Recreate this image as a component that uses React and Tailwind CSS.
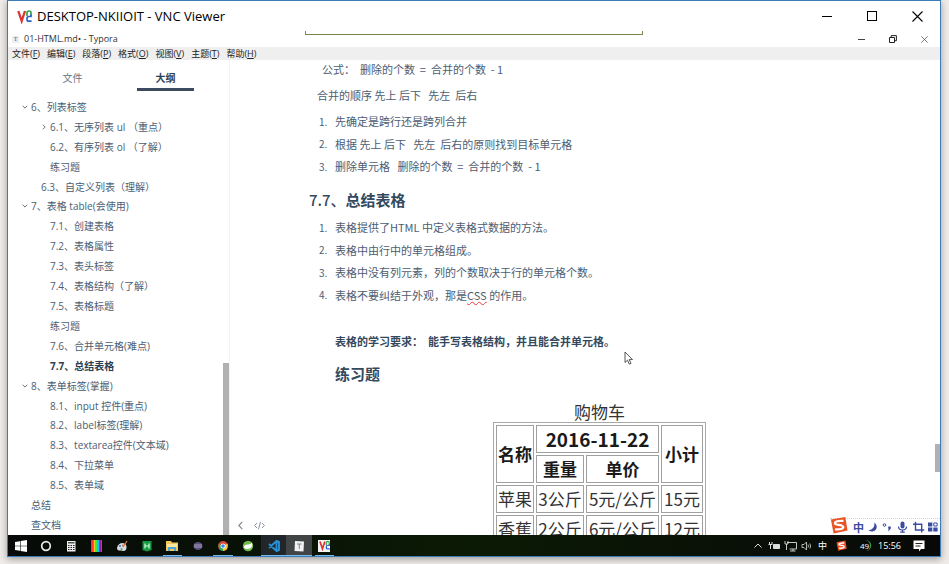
import React from "react";

const UI = "font-['Open_Sans','Noto_Sans_CJK_SC',sans-serif]";

const menus = [
  ["文件", "F"], ["编辑", "E"], ["段落", "P"], ["格式", "O"],
  ["视图", "V"], ["主题", "T"], ["帮助", "H"],
];

const outline = [
  { t: "6、列表标签", l: 0, a: "down" },
  { t: "6.1、无序列表 ul （重点）", l: 2, a: "right" },
  { t: "6.2、有序列表 ol （了解）", l: 2 },
  { t: "练习题", l: 2 },
  { t: "6.3、自定义列表（理解）", l: 1 },
  { t: "7、表格 table(会使用)", l: 0, a: "down" },
  { t: "7.1、创建表格", l: 2 },
  { t: "7.2、表格属性", l: 2 },
  { t: "7.3、表头标签", l: 2 },
  { t: "7.4、表格结构（了解）", l: 2 },
  { t: "7.5、表格标题", l: 2 },
  { t: "练习题", l: 2 },
  { t: "7.6、合并单元格(难点)", l: 2 },
  { t: "7.7、总结表格", l: 2, active: true },
  { t: "8、表单标签(掌握)", l: 0, a: "down" },
  { t: "8.1、input 控件(重点)", l: 2 },
  { t: "8.2、label标签(理解)", l: 2 },
  { t: "8.3、textarea控件(文本域)", l: 2 },
  { t: "8.4、下拉菜单", l: 2 },
  { t: "8.5、表单域", l: 2 },
  { t: "总结", l: 0 },
  { t: "查文档", l: 0 },
];

const indent = ["pl-[14px]", "pl-6", "pl-[33px]"];

function Arrow({ kind }) {
  return (
    <span className="flex w-[9px] shrink-0 items-center">
      {kind && (
        <svg width="6" height="6" viewBox="0 0 6 6" fill="none" stroke="#66727f">
          <path d={kind === "down" ? "M.7 1.8 3 4.1 5.3 1.8" : "M1.9.7 4.2 3 1.9 5.3"} />
        </svg>
      )}
    </span>
  );
}

function VncLogo({ size }) {
  return (
    <svg width={size} height={size} viewBox="0 0 15 15" fill="none">
      <path d="M1.300 2 4.700 12 8 2" stroke="#df3434" strokeWidth="2.300" />
      <path d="M10 7V3.800Q10 2 12 2T14 3.800V6.500" stroke="#2fa84a" strokeWidth="1.700" />
      <path d="M14 5.500V7.500H11.800Q10 7.500 10 9.200V10.500Q10 12.200 11.800 12.200H14.600" stroke="#2b63c9" strokeWidth="1.700" />
    </svg>
  );
}

function CloseIcon({ size }) {
  return (
    <svg width={size} height={size} viewBox="0 0 11 11" stroke="currentColor" strokeWidth="1.1">
      <path d="M.5.5 10.500 10.500M10.500.5.5 10.500" />
    </svg>
  );
}

function TitleBars() {
  return (
    <header className={UI}>
      <div className="flex h-[30px] items-center pl-[9px] text-black">
        <VncLogo size={15} />
        <h1 className="ml-[5px] flex-1 text-[13px] leading-4">DESKTOP-NKIIOIT - VNC Viewer</h1>
        <button aria-label="最小化" className="flex h-full w-[45px] items-center justify-center"><span className="h-px w-[10px] bg-black" /></button>
        <button aria-label="最大化" className="flex h-full w-[45px] items-center justify-center"><span className="size-[10px] border border-black" /></button>
        <button aria-label="关闭" className="flex h-full w-[46px] items-center justify-center"><CloseIcon size={11} /></button>
      </div>
      <div className="flex h-4 items-center pl-1 text-[#333]">
        <span className="flex size-[7px] items-center justify-center bg-[#eee] font-['Liberation_Serif',serif] text-[6px] text-[#555]">T</span>
        <h2 className="ml-[5px] flex-1 text-[9px] leading-4">01-HTML.md• - Typora</h2>
        <button aria-label="最小化文档窗口" className="flex h-full w-[31px] items-center justify-center"><span className="h-px w-[7px] bg-[#444]" /></button>
        <button aria-label="还原文档窗口" className="flex h-full w-[31px] items-center justify-center">
          <svg width="8" height="8" viewBox="0 0 8 8" fill="none" stroke="#222" strokeWidth="1"><path d="M.5 2.500H5.500V7.500H.5ZM2.200 2.500V.6H7.400V5.700H5.500" /></svg>
        </button>
        <button aria-label="关闭文档窗口" className="flex h-full w-[32px] items-center justify-center text-[#444]"><CloseIcon size={7} /></button>
      </div>
      <nav className="flex h-[13px] items-center gap-[7px] bg-[#efefef] pl-1 text-[9px] leading-[13px] text-[#222]">
        {menus.map(([name, key]) => (
          <button key={key} className="whitespace-nowrap">{name}(<u>{key}</u>)</button>
        ))}
      </nav>
    </header>
  );
}

function Sidebar() {
  return (
    <aside className={`${UI} relative flex w-[222px] shrink-0 flex-col border-r border-[#f3f3f3] text-[10px] text-[#4c5d72]`}>
      <div className="flex h-[37px] shrink-0 pl-[18px]">
        <button className="flex w-[93px] items-start justify-center pt-[11px] leading-[15px] text-[#66727f]">文件</button>
        <button className="flex w-[93px] flex-col items-center pt-[11px] font-bold leading-[15px] text-[#2f4358]">
          大纲
          <span className="mt-[2px] h-[3px] w-[57px] bg-[#3c4c5e]" />
        </button>
      </div>
      <ul className="grid min-h-0 flex-1 auto-rows-fr">
        {outline.map((o, i) => (
          <li key={i} className={`${indent[o.l]} flex min-h-0 items-center whitespace-nowrap leading-4`}>
            <Arrow kind={o.a} />
            <a href="#outline" className={o.active ? "font-bold text-[#2c3e50]" : ""}>{o.t}</a>
          </li>
        ))}
      </ul>
      <div className="absolute bottom-0 right-0 h-[172px] w-[6px] bg-[#b1b1b1]" />
    </aside>
  );
}

function Steps({ items, className }) {
  return (
    <ol className={`grid auto-rows-fr ${className}`}>
      {items.map((it, i) => (
        <li key={i} className="flex items-center whitespace-pre pl-[10px]">
          <span className="w-4 shrink-0 text-[10px]">{i + 1}.</span>
          <span>{it}</span>
        </li>
      ))}
    </ol>
  );
}

const cell = "border border-[#a0a0a0] p-0 h-7 whitespace-nowrap text-center";

function CartTable() {
  return (
    <table className="mx-auto w-[213px] table-fixed border-separate border-spacing-[2px] border border-[#a8a8a8] text-[17px] leading-5 text-[#333]">
      <caption className="h-5 text-[17px] leading-5">购物车</caption>
      <colgroup>
        <col className="w-[38px]" /><col className="w-[48px]" /><col className="w-[73px]" /><col className="w-[42px]" />
      </colgroup>
      <thead className="text-[#1a1a1a]">
        <tr>
          <th rowSpan={2} className={cell}>名称</th>
          <th colSpan={2} className={`${cell} text-[19px]`}>2016-11-22</th>
          <th rowSpan={2} className={cell}>小计</th>
        </tr>
        <tr><th className={cell}>重量</th><th className={cell}>单价</th></tr>
      </thead>
      <tbody>
        <tr><td className={cell}>苹果</td><td className={cell}>3公斤</td><td className={cell}>5元/公斤</td><td className={cell}>15元</td></tr>
        <tr><td className={cell}>香蕉</td><td className={cell}>2公斤</td><td className={cell}>6元/公斤</td><td className={cell}>12元</td></tr>
      </tbody>
    </table>
  );
}

function SogouMark({ size }) {
  return (
    <svg width={size} height={size} viewBox="0 0 20 20" fill="none">
      <path d="M1 4 17 1 19.500 16 4 19.500Z" fill="#ea5424" />
      <path d="M15 5.500Q6 5 5.500 7.800C5.200 10.500 15 9 14.800 12.500Q14 15.500 5.500 14.800" stroke="#fff" strokeWidth="2.600" />
    </svg>
  );
}

function ImeBar() {
  return (
    <div className="absolute bottom-0 right-0 flex h-[17px] items-center border-t border-dotted border-[#cfcfcf] bg-white text-[#3b4ba0]">
      <div className="-mt-1"><SogouMark size={18} /></div>
      <button className="ml-1 w-[13px] text-[11px] font-bold leading-4">中</button>
      <svg className="ml-[2px]" width="73" height="12" viewBox="0 0 73 12" fill="#3b4ba0">
        <path d="M7.500 1.500Q11 5 9 8.500 6 12 1.500 9.200 7.800 8.500 7.500 1.500Z" />
        <circle cx="17.500" cy="4" r="1.300" fill="none" stroke="#3b4ba0" />
        <path d="M21.200 5.500h2.600v2L22 9.800h-1l.8-2h-.6z" />
        <rect x="33.500" y=".5" width="4" height="7" rx="2" />
        <path d="M31.500 5.500Q31.500 9 35.500 9T39.500 5.500M35.500 9v2.500M33.200 11.200h4.600" fill="none" stroke="#3b4ba0" strokeWidth="1.200" />
        <path d="M48.500.8V9h8.700M46 3.200h8.700v8.300" fill="none" stroke="#3b4ba0" strokeWidth="1.400" />
        <path d="M61 1.500h4.300v4H61zM61 6.500h4.300v4H61zM66.300 6.500h4.300v4h-4.300z" />
        <path d="M66.800 2h3.300v3h-3.300z" fill="none" stroke="#3b4ba0" />
      </svg>
    </div>
  );
}

function Document() {
  return (
    <main className="relative min-w-0 flex-1 overflow-hidden font-['Noto_Sans_CJK_SC',sans-serif] text-[11px] text-[#4c5d72]">
      <article className="h-0 pl-[79px] pr-[50px]">
        <p className="whitespace-pre pl-[13px] leading-[18px]">公式：  删除的个数  =  合并的个数  - 1</p>
        <p className="mt-[6px] whitespace-pre pl-2 leading-[22px]">合并的顺序 先上 后下   先左  后右</p>
        <Steps
          className="mt-1 h-[68px]"
          items={["先确定是跨行还是跨列合并", "根据 先上 后下   先左  后右的原则找到目标单元格", "删除单元格   删除的个数  =  合并的个数  - 1"]}
        />
        <h3 className="mt-[10px] text-[15px] font-bold leading-6 text-[#34495e]"><span className="font-medium">7.7、</span>总结表格</h3>
        <Steps
          className="mt-1 h-[90px]"
          items={[
            "表格提供了HTML 中定义表格式数据的方法。",
            "表格中由行中的单元格组成。",
            "表格中没有列元素，列的个数取决于行的单元格个数。",
            <>表格不要纠结于外观，那是<span className="underline decoration-[#e5383b] decoration-wavy decoration-1 underline-offset-1">CSS</span> 的作用。</>,
          ]}
        />
        <p className="mt-6 whitespace-pre pl-[26px] font-bold leading-[22px] text-[#34495e]">表格的学习要求：  能手写表格结构，并且能合并单元格。</p>
        <h3 className="mb-4 mt-[10px] pl-[26px] text-[15px] font-bold leading-6 text-[#34495e]">练习题</h3>
        <CartTable />
      </article>
      <div className="absolute bottom-1 left-1 flex items-center gap-2 text-[#7d858e]">
        <button aria-label="收起侧边栏" className="flex h-3 w-3 items-center justify-center">
          <svg width="5" height="9" viewBox="0 0 5 9" fill="none" stroke="currentColor" strokeWidth="1.100"><path d="M4.300.8.8 4.500 4.300 8.200" /></svg>
        </button>
        <button aria-label="源代码模式">
          <svg width="11" height="9" viewBox="0 0 11 9" fill="none" stroke="currentColor" strokeWidth=".9"><path d="M3 2 .6 4.500 3 7M8 2l2.400 2.500L8 7M6.500.8l-2 7.400" /></svg>
        </button>
      </div>
      <div className="absolute bottom-[63px] right-0 h-7 w-[5px] bg-[#b1b1b1]" />
      <svg className="absolute left-[394px] top-[291px]" width="9" height="14" viewBox="0 0 9 14" fill="#fff" stroke="#444" strokeWidth=".9">
        <path d="M1 1v10.500l2.500-2.300 1.800 4 1.700-.8-1.800-3.800H8.500Z" />
      </svg>
      <ImeBar />
    </main>
  );
}

const apps = [
  { n: "开始", i: <path fill="#fff" d="M0 2 5 1.200V5.700H0ZM5.600 1.100 12 0V5.700H5.600ZM0 6.300H5V10.800L0 10ZM5.600 6.300H12V12L5.600 10.900Z" /> },
  { n: "Cortana", i: <circle cx="6" cy="6" r="4.300" fill="none" stroke="#e8e8e8" strokeWidth="1.700" /> },
  { n: "计算器", i: <g><path fill="#f0f0f0" d="M2 1h8.500v10.500H2z" /><path stroke="#222" strokeWidth="1" strokeDasharray="1.500 1" d="M3 5.500h7M3 7.500h7M3 9.500h7" /><path fill="#555" d="M3 2h6.500v1.500H3z" /></g> },
  { n: "调色", i: <g><path fill="#f33" d="M0 0h2.500v12H0z" /><path fill="#fc2" d="M2.500 0h1.500v12H2.500z" /><path fill="#3e4" d="M4 0h2v12H4z" /><path fill="#2bf" d="M6 0h2v12H6z" /><path fill="#73f" d="M8 0h1.500v12H8z" /><path fill="#f1a" d="M9.500 0H11v12H9.500z" /></g> },
  { n: "画图", i: <g><path fill="#d8dde3" d="M1 8Q2 3 7 3q4 1 3.500 5T5 10.500Q1 11 1 8Z" /><circle cx="4" cy="6" r="1" fill="#37b" /><circle cx="7" cy="5.500" r="1" fill="#d64" /><circle cx="5.500" cy="9" r="1" fill="#4a5" /><path stroke="#d87a3c" strokeWidth="1.300" d="m7 7 4-6" /></g> },
  { n: "HBuilder", i: <g><path fill="#159a43" d="M1.500 1h9v9L6 11.500 1.500 10z" /><path fill="none" stroke="#d8ffe2" strokeWidth="1.200" d="M4 3.500v5M8 3.500v5M4 6h4" /></g> },
  { n: "文件资源管理器", on: true, i: <g><path fill="#f1c65a" d="M0 1h5l1 1.500h6V11H0z" /><path fill="#ffe7a0" d="M1 4h10v3H1z" /><path fill="#4ba6dc" d="M2 7h8v4H8V9H4v2H2z" /></g> },
  { n: "Eclipse", i: <g><ellipse cx="6" cy="6" rx="4.500" ry="4" fill="#5b4c7a" /><path stroke="#bdb4d0" strokeWidth=".8" d="M2 5h8M2 7h8" /></g> },
  { n: "Chrome", on: true, i: <g><circle cx="6" cy="6" r="5" fill="#dc4437" /><path fill="#30a553" d="M1.500 4 6 6v5Q1 10.500 1.500 4Z" /><path fill="#f7ca3e" d="M6 11V6l4.500-2.500Q12 10 6 11Z" /><circle cx="6" cy="6" r="2.500" fill="#fff" /><circle cx="6" cy="6" r="1.800" fill="#4285f4" /></g> },
  { n: "Spring", i: <g><circle cx="6" cy="6" r="5.200" fill="#73b848" /><path fill="#fff" d="M2 8Q1.500 4.500 6 4.500 9 4.500 10 2.500 11.500 9 5.500 9 3.500 9 2 8Z" /></g> },
  { n: "VS Code", on: true, shade: "bg-[#202629]", i: <path fill="none" stroke="#2790d4" strokeWidth="1.900" strokeLinejoin="round" d="M8.500 1 1 8M1 4l7.500 7L11 10V2L8.500 1v10" /> },
  { n: "Typora", on: true, shade: "bg-[#414545]", i: <g><path fill="#f2f2f2" d="m2 1 9 .5-.5 10-9-.500z" /><path fill="none" stroke="#777" strokeWidth=".9" d="M4 4h4.500M6.300 4v5" /></g> },
];

function Taskbar() {
  return (
    <footer className={`${UI} flex h-[21px] shrink-0 items-stretch justify-between bg-linear-to-r from-[#070a08] via-[#0b1a04] to-[#080907] text-white`}>
      <div className="grid w-[329px] grid-cols-13">
        {apps.map((a) => (
          <button key={a.n} aria-label={a.n} className={`relative flex items-center justify-center ${a.shade || ""}`}>
            <svg width="12" height="12" viewBox="0 0 12 12">{a.i}</svg>
            {a.on && <span className={`absolute bottom-0 h-px bg-[#76b9ed] ${a.shade ? "inset-x-0" : "inset-x-[3px]"}`} />}
          </button>
        ))}
        <button aria-label="VNC Viewer" className="relative flex items-center justify-center">
          <span className="flex size-3 items-center justify-center bg-[#f4f4f4]"><VncLogo size={11} /></span>
          <span className="absolute inset-x-[3px] bottom-0 h-px bg-[#76b9ed]" />
        </button>
      </div>
      <div className="flex items-center pr-[15px] text-[9px] leading-4">
        <svg width="60" height="12" viewBox="0 0 60 12" fill="none" stroke="#ddd">
          <path d="M1.500 7.500 5 4l3.500 3.500" />
          <path d="M16.500 2v2M19 2v2M15.500 4.500h4M17.500 5v4" />
          <path d="M20.500 4.500h6v4h-6z" fill="#ddd" />
          <path d="M34 2.500h9.500v6.500h-7M40 9v2M37 11h5.500M32 1v3h3V1M33.500 4v6" strokeWidth=".9" />
          <path d="M49 4.500h2L53.500 2v8L51 7.500h-2zM55 4.500q1 1.500 0 3M56.800 3.500q1.700 2.500 0 5" strokeWidth=".8" />
        </svg>
        <button className="ml-[5px]">中</button>
        <span className="ml-[9px]"><SogouMark size={11} /></span>
        <span className="ml-3 w-3 rounded-full border-r border-[#3db57a] text-center text-[8px] leading-[11px]">49</span>
        <time className="ml-[7px]">15:56</time>
        <svg className="ml-3" width="12" height="12" viewBox="0 0 12 12">
          <path fill="#fff" d="M.5.5h11v8.500H8L6 11.500V9H.5z" /><path stroke="#222" d="M2.500 3.500h7M2.500 6h5" />
        </svg>
      </div>
    </footer>
  );
}

export default function App() {
  return (
    <div className="h-screen bg-[#eeebe9] pb-[7px] pl-[7px] pr-2">
      <div className="relative flex h-full flex-col border border-[#3a7cb8] bg-white shadow-[0_2px_7px_rgba(0,0,0,0.35)]">
        <TitleBars />
        <div className="flex min-h-0 flex-1">
          <Sidebar />
          <Document />
        </div>
        <Taskbar />
        <div className="absolute left-[297px] top-[30px] h-1 w-[338px] border-x border-b border-[#73874f]" />
      </div>
    </div>
  );
}
